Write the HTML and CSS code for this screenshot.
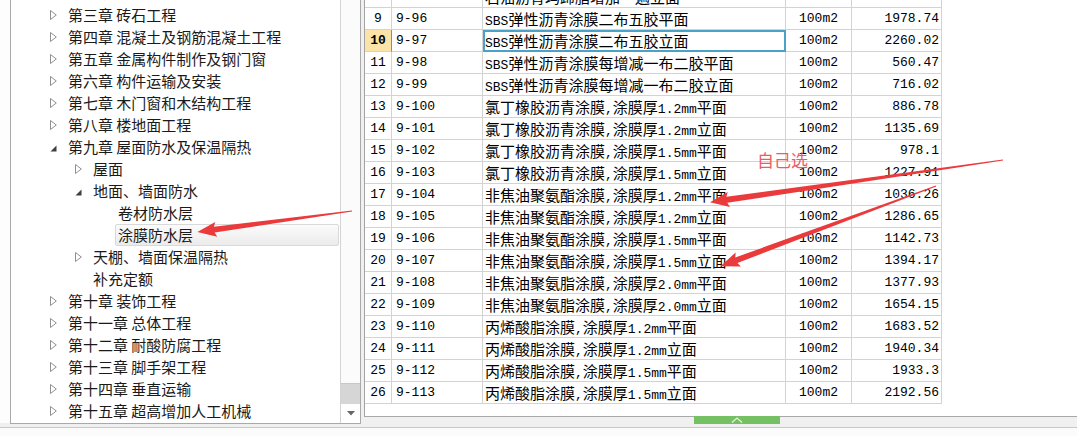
FILE: index.html
```html
<!DOCTYPE html>
<html lang="zh">
<head>
<meta charset="utf-8">
<title>定额</title>
<link rel="stylesheet" href="styles.css">
</head>
<body>
<div class="main">
  <div class="gutter"></div>
  <div class="tree-panel">
    <div class="tree">
      <div class="node l1"><span class="tg"><svg class="tri-c" width="7" height="10"><polygon points="0.5,0.5 6.3,5 0.5,9.5"/></svg></span><span class="lb">第三章 砖石工程</span></div>
      <div class="node l1"><span class="tg"><svg class="tri-c" width="7" height="10"><polygon points="0.5,0.5 6.3,5 0.5,9.5"/></svg></span><span class="lb">第四章 混凝土及钢筋混凝土工程</span></div>
      <div class="node l1"><span class="tg"><svg class="tri-c" width="7" height="10"><polygon points="0.5,0.5 6.3,5 0.5,9.5"/></svg></span><span class="lb">第五章 金属构件制作及钢门窗</span></div>
      <div class="node l1"><span class="tg"><svg class="tri-c" width="7" height="10"><polygon points="0.5,0.5 6.3,5 0.5,9.5"/></svg></span><span class="lb">第六章 构件运输及安装</span></div>
      <div class="node l1"><span class="tg"><svg class="tri-c" width="7" height="10"><polygon points="0.5,0.5 6.3,5 0.5,9.5"/></svg></span><span class="lb">第七章 木门窗和木结构工程</span></div>
      <div class="node l1"><span class="tg"><svg class="tri-c" width="7" height="10"><polygon points="0.5,0.5 6.3,5 0.5,9.5"/></svg></span><span class="lb">第八章 楼地面工程</span></div>
      <div class="node l1"><span class="tg"><svg class="tri-e" width="7" height="7"><polygon points="6.5,0.5 6.5,6.5 0.5,6.5"/></svg></span><span class="lb">第九章 屋面防水及保温隔热</span></div>
      <div class="node l2"><span class="tg"><svg class="tri-c" width="7" height="10"><polygon points="0.5,0.5 6.3,5 0.5,9.5"/></svg></span><span class="lb">屋面</span></div>
      <div class="node l2"><span class="tg"><svg class="tri-e" width="7" height="7"><polygon points="6.5,0.5 6.5,6.5 0.5,6.5"/></svg></span><span class="lb">地面、墙面防水</span></div>
      <div class="node l3"><span class="tg"></span><span class="lb">卷材防水层</span></div>
      <div class="node l3"><span class="tg"></span><span class="lb sel">涂膜防水层</span></div>
      <div class="node l2"><span class="tg"><svg class="tri-c" width="7" height="10"><polygon points="0.5,0.5 6.3,5 0.5,9.5"/></svg></span><span class="lb">天棚、墙面保温隔热</span></div>
      <div class="node l2"><span class="tg"></span><span class="lb">补充定额</span></div>
      <div class="node l1"><span class="tg"><svg class="tri-c" width="7" height="10"><polygon points="0.5,0.5 6.3,5 0.5,9.5"/></svg></span><span class="lb">第十章 装饰工程</span></div>
      <div class="node l1"><span class="tg"><svg class="tri-c" width="7" height="10"><polygon points="0.5,0.5 6.3,5 0.5,9.5"/></svg></span><span class="lb">第十一章 总体工程</span></div>
      <div class="node l1"><span class="tg"><svg class="tri-c" width="7" height="10"><polygon points="0.5,0.5 6.3,5 0.5,9.5"/></svg></span><span class="lb">第十二章 耐酸防腐工程</span></div>
      <div class="node l1"><span class="tg"><svg class="tri-c" width="7" height="10"><polygon points="0.5,0.5 6.3,5 0.5,9.5"/></svg></span><span class="lb">第十三章 脚手架工程</span></div>
      <div class="node l1"><span class="tg"><svg class="tri-c" width="7" height="10"><polygon points="0.5,0.5 6.3,5 0.5,9.5"/></svg></span><span class="lb">第十四章 垂直运输</span></div>
      <div class="node l1"><span class="tg"><svg class="tri-c" width="7" height="10"><polygon points="0.5,0.5 6.3,5 0.5,9.5"/></svg></span><span class="lb">第十五章 超高增加人工机械</span></div>
    </div>
    <div class="vscroll">
      <div class="track"></div>
      <div class="thumb"></div>
      <div class="sbtn"><svg width="8" height="5"><polygon points="0,0 8,0 4,4.5"/></svg></div>
    </div>
  </div>
  <div class="right">
    <div class="grid-panel">
      <div class="rows">
        <div class="row"><div class="c-n">8</div><div class="c-code">9-95</div><div class="c-name">石油沥青玛蹄脂增加一遍立面</div><div class="c-unit">100m2</div><div class="c-price">822.14</div></div>
        <div class="row"><div class="c-n">9</div><div class="c-code">9-96</div><div class="c-name"><span class="a">SBS</span>弹性沥青涂膜二布五胶平面</div><div class="c-unit">100m2</div><div class="c-price">1978.74</div></div>
        <div class="row cur"><div class="c-n">10</div><div class="c-code">9-97</div><div class="c-name"><span class="a">SBS</span>弹性沥青涂膜二布五胶立面</div><div class="c-unit">100m2</div><div class="c-price">2260.02</div></div>
        <div class="row"><div class="c-n">11</div><div class="c-code">9-98</div><div class="c-name"><span class="a">SBS</span>弹性沥青涂膜每增减一布二胶平面</div><div class="c-unit">100m2</div><div class="c-price">560.47</div></div>
        <div class="row"><div class="c-n">12</div><div class="c-code">9-99</div><div class="c-name"><span class="a">SBS</span>弹性沥青涂膜每增减一布二胶立面</div><div class="c-unit">100m2</div><div class="c-price">716.02</div></div>
        <div class="row"><div class="c-n">13</div><div class="c-code">9-100</div><div class="c-name">氯丁橡胶沥青涂膜<span class="a">,</span>涂膜厚<span class="a">1.2mm</span>平面</div><div class="c-unit">100m2</div><div class="c-price">886.78</div></div>
        <div class="row"><div class="c-n">14</div><div class="c-code">9-101</div><div class="c-name">氯丁橡胶沥青涂膜<span class="a">,</span>涂膜厚<span class="a">1.2mm</span>立面</div><div class="c-unit">100m2</div><div class="c-price">1135.69</div></div>
        <div class="row"><div class="c-n">15</div><div class="c-code">9-102</div><div class="c-name">氯丁橡胶沥青涂膜<span class="a">,</span>涂膜厚<span class="a">1.5mm</span>平面</div><div class="c-unit">100m2</div><div class="c-price">978.1</div></div>
        <div class="row"><div class="c-n">16</div><div class="c-code">9-103</div><div class="c-name">氯丁橡胶沥青涂膜<span class="a">,</span>涂膜厚<span class="a">1.5mm</span>立面</div><div class="c-unit">100m2</div><div class="c-price">1227.91</div></div>
        <div class="row"><div class="c-n">17</div><div class="c-code">9-104</div><div class="c-name">非焦油聚氨酯涂膜<span class="a">,</span>涂膜厚<span class="a">1.2mm</span>平面</div><div class="c-unit">100m2</div><div class="c-price">1036.26</div></div>
        <div class="row"><div class="c-n">18</div><div class="c-code">9-105</div><div class="c-name">非焦油聚氨酯涂膜<span class="a">,</span>涂膜厚<span class="a">1.2mm</span>立面</div><div class="c-unit">100m2</div><div class="c-price">1286.65</div></div>
        <div class="row"><div class="c-n">19</div><div class="c-code">9-106</div><div class="c-name">非焦油聚氨酯涂膜<span class="a">,</span>涂膜厚<span class="a">1.5mm</span>平面</div><div class="c-unit">100m2</div><div class="c-price">1142.73</div></div>
        <div class="row"><div class="c-n">20</div><div class="c-code">9-107</div><div class="c-name">非焦油聚氨酯涂膜<span class="a">,</span>涂膜厚<span class="a">1.5mm</span>立面</div><div class="c-unit">100m2</div><div class="c-price">1394.17</div></div>
        <div class="row"><div class="c-n">21</div><div class="c-code">9-108</div><div class="c-name">非焦油聚氨脂涂膜<span class="a">,</span>涂膜厚<span class="a">2.0mm</span>平面</div><div class="c-unit">100m2</div><div class="c-price">1377.93</div></div>
        <div class="row"><div class="c-n">22</div><div class="c-code">9-109</div><div class="c-name">非焦油聚氨脂涂膜<span class="a">,</span>涂膜厚<span class="a">2.0mm</span>立面</div><div class="c-unit">100m2</div><div class="c-price">1654.15</div></div>
        <div class="row"><div class="c-n">23</div><div class="c-code">9-110</div><div class="c-name">丙烯酸脂涂膜<span class="a">,</span>涂膜厚<span class="a">1.2mm</span>平面</div><div class="c-unit">100m2</div><div class="c-price">1683.52</div></div>
        <div class="row"><div class="c-n">24</div><div class="c-code">9-111</div><div class="c-name">丙烯酸脂涂膜<span class="a">,</span>涂膜厚<span class="a">1.2mm</span>立面</div><div class="c-unit">100m2</div><div class="c-price">1940.34</div></div>
        <div class="row"><div class="c-n">25</div><div class="c-code">9-112</div><div class="c-name">丙烯酸脂涂膜<span class="a">,</span>涂膜厚<span class="a">1.5mm</span>平面</div><div class="c-unit">100m2</div><div class="c-price">1933.3</div></div>
        <div class="row"><div class="c-n">26</div><div class="c-code">9-113</div><div class="c-name">丙烯酸脂涂膜<span class="a">,</span>涂膜厚<span class="a">1.5mm</span>立面</div><div class="c-unit">100m2</div><div class="c-price">2192.56</div></div>
      </div>
    </div>
    <div class="splitter">
      <div class="tab"><svg width="12" height="6"><polyline points="1,5.5 6,1 11,5.5"/></svg></div>
    </div>
  </div>
</div>
<svg class="annot" width="1077" height="436" viewBox="0 0 1077 436">
  <g fill="#ea3a3c">
    <polygon transform="translate(352,211) rotate(172.3)" points="0,-0.6 139,-3 137,-7.5 156,0 137,7.5 139,3 0,0.6"/>
    <polygon transform="translate(1003,160) rotate(171.8)" points="0,-0.6 279,-3 277,-7.5 296,0 277,7.5 279,3 0,0.6"/>
    <polygon transform="translate(936,186) rotate(159.6)" points="0,-0.5 213,-3 211,-7.5 230,0 211,7.5 213,3 0,0.5"/>
  </g>
</svg>
<span class="note">自己选</span>
</body>
</html>
```

FILE: styles.css
```css
html, body {
  margin: 0;
  padding: 0;
}
body {
  width: 1077px;
  height: 436px;
  overflow: hidden;
  position: relative;
  background: #fbfbfb;
  font-family: "Noto Sans CJK SC", sans-serif;
  color: #1a1a1a;
}
.main {
  display: flex;
  height: 427px;
  background: #f0f0f0;
  border-bottom: 1px solid #c9c9c9;
}
.gutter {
  width: 10px;
  height: 423px;
  background: #fdfdfd;
  flex: none;
}
.tree-panel {
  width: 351px;
  height: 424px;
  box-sizing: border-box;
  border-left: 1px solid #a9a9a9;
  border-right: 1px solid #a9a9a9;
  border-bottom: 1px solid #a9a9a9;
  background: #fff;
  display: flex;
  flex: none;
}
.tree {
  flex: 1;
  padding-top: 4px;
  overflow: hidden;
  font-size: 15px;
}
.node {
  display: flex;
  align-items: center;
  height: 22px;
  white-space: nowrap;
}
.node.l1 { padding-left: 39px; }
.node.l2 { padding-left: 64px; }
.node.l3 { padding-left: 89px; }
.tg {
  width: 18px;
  height: 22px;
  flex: none;
  display: flex;
  align-items: center;
}
.tri-c polygon {
  fill: none;
  stroke: #8f8f8f;
  stroke-width: 1;
}
.tri-e {
  margin-top: 2px;
}
.tri-e polygon {
  fill: #3e3e3e;
}
.lb {
  line-height: 22px;
}
.lb.sel {
  flex: 1;
  height: 22px;
  box-sizing: border-box;
  margin-left: -3px;
  margin-right: 1px;
  padding-left: 2px;
  line-height: 20px;
  border: 1px solid #d9d9d9;
  border-radius: 2px;
  background: linear-gradient(#fbfbfb, #ebebeb);
}
.vscroll {
  width: 20px;
  box-sizing: border-box;
  border-left: 1px solid #d3d3d3;
  background: #fbfbfb;
  display: flex;
  flex-direction: column;
  flex: none;
}
.track { flex: 1; }
.thumb {
  height: 20px;
  background: #d6d6d6;
  border-top: 1px solid #c8c8c8;
  box-sizing: border-box;
}
.sbtn {
  height: 20px;
  box-sizing: border-box;
  border-top: 1px solid #d6d6d6;
  background: #fff;
  display: flex;
  align-items: center;
  justify-content: center;
}
.sbtn polygon { fill: #666; }
.right {
  flex: 1;
  margin-left: 3px;
  display: flex;
  flex-direction: column;
}
.grid-panel {
  height: 417px;
  box-sizing: border-box;
  border-left: 1px solid #a3a3a3;
  border-bottom: 1px solid #a8a8a8;
  background: #fff;
  overflow: hidden;
}
.rows {
  margin-top: -14px;
}
.row {
  display: grid;
  grid-template-columns: 27px 91px 303px 66px 90px;
  height: 22px;
}
.row > div {
  box-sizing: border-box;
  border-right: 1px solid #d3d3d3;
  border-bottom: 1px solid #d3d3d3;
  line-height: 21px;
  white-space: nowrap;
  overflow: hidden;
  color: #000;
}
.c-n, .c-code, .c-unit, .c-price {
  font-family: "Liberation Mono", monospace;
  font-size: 13px;
}
.c-n { text-align: center; }
.c-code { padding-left: 4px; }
.c-name {
  font-family: "Noto Sans CJK SC", sans-serif;
  font-size: 15px;
  padding-left: 2px;
}
.c-name .a {
  font-family: "Liberation Mono", monospace;
  font-size: 13px;
}
.c-unit { text-align: center; }
.c-price { text-align: right; padding-right: 2px; }
.row.cur .c-n {
  background: #fce4a8;
  font-weight: bold;
  border-right: 1px solid #4aa3c6;
}
.row.cur .c-name {
  outline: 2px solid #4aa3c6;
  outline-offset: -2px;
}
.splitter {
  height: 10px;
}
.tab {
  margin-left: 330px;
  margin-top: -1px;
  width: 86px;
  height: 8px;
  background: #76c064;
  display: flex;
  align-items: center;
  justify-content: center;
}
.tab polyline {
  fill: none;
  stroke: #e6f4e0;
  stroke-width: 1.2;
}
.annot {
  position: absolute;
  left: 0;
  top: 0;
  pointer-events: none;
}
.note {
  position: absolute;
  left: 757px;
  top: 149px;
  font-family: "Noto Sans CJK SC", sans-serif;
  font-size: 17px;
  line-height: 22px;
  color: #ec5a63;
}
```
